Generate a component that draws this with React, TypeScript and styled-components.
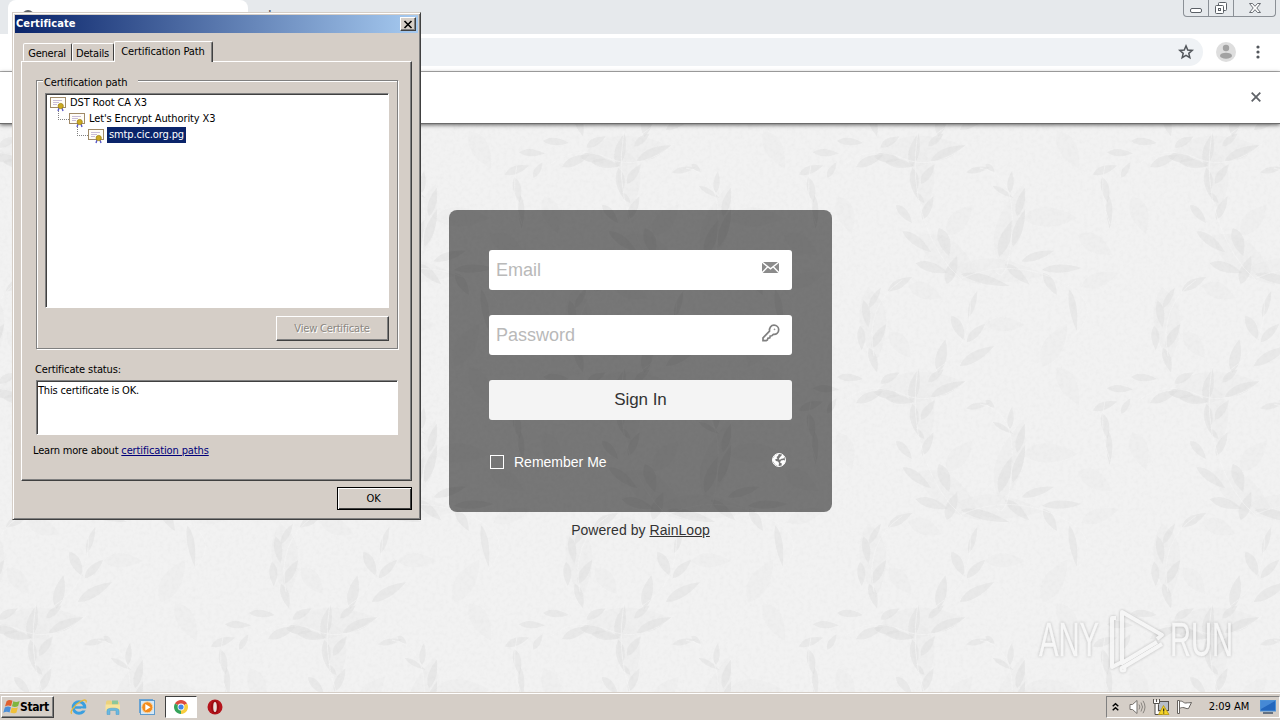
import React from "react";
import styled, { createGlobalStyle, css } from "styled-components";

const TILE_W = 294;
const TILE_H = 236;

// cx, cy, length, width, angle
const leaves = [
  [10, 22, 26, 8, 4], [30, 41, 30, 10, -24], [47, 38, 26, 11, 5], [60, 44, 30, 10, 8],
  [50, 22, 22, 9, -30], [75, 30, 34, 12, -78], [108, 33, 38, 11, -24], [96, 20, 20, 8, -40],
  [88, 54, 24, 9, -55], [74, 62, 28, 10, 84], [80, 78, 14, 6, 50], [64, 94, 24, 9, 48],
  [88, 88, 26, 9, -65], [77, 122, 36, 10, 36], [104, 122, 30, 13, 70], [92, 148, 34, 11, 16],
  [112, 150, 30, 12, -70], [138, 50, 24, 7, -12], [150, 48, 12, 6, 40], [163, 72, 24, 6, 30],
  [171, 62, 22, 7, -85], [181, 82, 30, 9, -75], [166, 118, 40, 12, -70], [179, 108, 40, 10, -72],
  [198, 136, 34, 9, -18], [222, 149, 40, 9, -3], [177, 154, 32, 10, 40], [145, 160, 50, 10, 14],
  [210, 164, 26, 10, 58], [233, 190, 42, 8, 80], [60, 164, 28, 10, -30], [35, 178, 24, 7, -60],
  [26, 194, 28, 9, 80], [21, 218, 24, 9, 86], [39, 216, 28, 10, -60], [33, 240, 26, 9, 72],
  [133, 184, 28, 7, -72], [118, 208, 28, 11, 62], [136, 213, 26, 9, -45], [137, 236, 40, 11, -30],
  [102, 236, 34, 12, -78], [265, 50, 26, 9, -20], [265, 70, 26, 9, 78], [269, 92, 34, 7, 88],
  [280, 33, 26, 8, 2], [286, 50, 18, 7, -60],
];

// larger, fainter patches behind the branches
const shadows = [
  [228, 30, 44, 20, 60], [210, 98, 56, 22, 0], [255, 125, 40, 20, 30], [215, 225, 50, 22, -60],
  [5, 95, 40, 20, 70], [120, 100, 40, 20, -50], [85, 172, 36, 18, 20], [165, 205, 40, 16, 0],
  [260, 160, 40, 16, -20], [60, 225, 34, 18, 50], [80, 32, 90, 34, -8], [82, 60, 60, 26, 84],
  [110, 140, 80, 34, 38], [172, 104, 84, 30, -74], [160, 152, 90, 26, 4], [32, 205, 76, 30, 84],
];

const stems =
  "M5 44 Q30 24 62 38 T128 24 M78 10 Q70 60 84 100 T122 160 M140 48 Q176 54 172 110 T156 152 M122 158 Q170 138 218 160 T236 214 M62 160 Q24 186 34 236 M130 176 Q134 226 96 250 M265 44 Q258 76 270 104";

const Leaf = ({ d }: { d: number[] }) => {
  const [x, y, l, w, a] = d;
  const h = l / 2;
  return (
    <path
      transform={`translate(${x} ${y}) rotate(${a})`}
      d={`M${-h} 0 Q${-h / 3} ${-w} ${h} 0 Q${-h / 4} ${w * 0.8} ${-h} 0z`}
    />
  );
};

const Wallpaper = () => (
  <WallpaperSvg>
    <defs>
      <filter id="paper" x="0" y="0" width="100%" height="100%">
        <feTurbulence type="fractalNoise" baseFrequency="0.25" numOctaves="3" seed="4" />
        <feColorMatrix values="0 0 0 0 0.4  0 0 0 0 0.4  0 0 0 0 0.4  0.5 0 0 0 -0.2" />
      </filter>
      <filter id="soft">
        <feGaussianBlur stdDeviation="0.7" />
      </filter>
      <g id="branches">
        <g fill="#dedede" fillOpacity="0.16">
          {shadows.map((d, i) => (
            <Leaf key={i} d={d} />
          ))}
        </g>
        <g fill="#dedede" fillOpacity="0.46">
          {leaves.map((d, i) => (
            <Leaf key={i} d={d} />
          ))}
        </g>
        <path d={stems} fill="none" stroke="#f5f5f5" strokeOpacity="0.6" strokeWidth="1" />
      </g>
      <pattern id="tile" x="840" y="-4" width={TILE_W} height={TILE_H} patternUnits="userSpaceOnUse">
        {[-1, 0, 1].map((i) =>
          [-1, 0, 1].map((j) => (
            <use key={`${i}${j}`} href="#branches" x={i * TILE_W} y={j * TILE_H} />
          ))
        )}
      </pattern>
    </defs>
    <rect width="100%" height="100%" fill="#f2f2f2" />
    <rect width="100%" height="100%" fill="url(#tile)" filter="url(#soft)" />
    <rect width="100%" height="100%" filter="url(#paper)" opacity="0.25" />
  </WallpaperSvg>
);

const CertIcon = () => (
  <svg width="17" height="16" viewBox="0 0 17 16">
    <rect x="0.5" y="2.5" width="15" height="10" fill="#fffdf8" stroke="#a08a68" />
    <path d="M3 5.5h9M3 7.500h6M3 9.500h4" stroke="#c9bdd8" />
    <path d="M9 13l-1 3M12 13l1 3" stroke="#5a5ac8" strokeWidth="1.4" />
    <circle cx="10.7" cy="11" r="2.6" fill="#cdaa22" stroke="#a08312" strokeWidth="0.8" />
  </svg>
);

const Connector = () => (
  <svg width="11" height="16">
    <path d="M0.5 0v9M0 8.5h11" stroke="#808080" strokeDasharray="1 1" fill="none" />
  </svg>
);

const chain = ["DST Root CA X3", "Let's Encrypt Authority X3", "smtp.cic.org.pg"];

const CertificateDialog = () => (
  <Dialog>
    <TitleBar>
      <span>Certificate</span>
      <CloseButton>
        <svg width="8" height="7">
          <path d="M0.5 0l7 7M7.5 0l-7 7" stroke="#000" strokeWidth="1.6" />
        </svg>
      </CloseButton>
    </TitleBar>
    <Tabs>
      <Tab $width={49}>
        <Txt $ls={-0.2}>General</Txt>
      </Tab>
      <Tab $width={42}>
        <Txt $ls={-0.2}>Details</Txt>
      </Tab>
      <Tab $width={99} $active>
        <Txt $ls={-0.1}>Certification Path</Txt>
      </Tab>
    </Tabs>
    <TabPage>
      <GroupBox>
        <Legend>
          <Txt $ls={-0.15}>Certification path</Txt>
        </Legend>
        <Tree>
          {chain.map((name, i) => (
            <TreeRow key={name} $level={i}>
              {i > 0 && <Connector />}
              <CertIcon />
              <NodeName $selected={i === 2}>{name}</NodeName>
            </TreeRow>
          ))}
        </Tree>
        <ViewButton>
          <Txt $ls={-0.17}>View Certificate</Txt>
        </ViewButton>
      </GroupBox>
      <StatusLabel>Certificate status:</StatusLabel>
      <StatusBox>
        <Txt $ls={-0.17}>This certificate is OK.</Txt>
      </StatusBox>
      <LearnMore>
        <Txt $ls={-0.17}>Learn more about </Txt>
        <a>certification paths</a>
      </LearnMore>
    </TabPage>
    <OkButton>OK</OkButton>
  </Dialog>
);

const Browser = () => (
  <>
    <TabStrip>
      <BrowserTab>
        <svg width="14" height="14">
          <circle cx="7" cy="7" r="6" fill="#5f6368" />
        </svg>
      </BrowserTab>
      <NewTab>+</NewTab>
      <WindowButtons>
        <WindowButton $width={24}>
          <svg width="14" height="16">
            <rect x="1.5" y="8.5" width="11" height="4" rx="1.5" fill="#fff" stroke="#5b6066" />
          </svg>
        </WindowButton>
        <WindowButton $width={25}>
          <svg width="14" height="16" fill="#fff" stroke="#5b6066">
            <rect x="4.5" y="2.5" width="8" height="8" rx="1" />
            <rect x="1.5" y="5.5" width="8" height="8" rx="1" />
            <rect x="4.5" y="8.5" width="2" height="2" />
          </svg>
        </WindowButton>
        <WindowButton $width={42}>
          <svg width="14" height="16" fill="#fff" stroke="#5b6066" strokeWidth="0.9">
            <path d="M1.5 3.5h3L7 6.3l2.500-2.800h3L8.800 8l3.700 4.500h-3L7 9.700 4.500 12.500h-3L5.200 8z" />
          </svg>
        </WindowButton>
      </WindowButtons>
    </TabStrip>
    <Toolbar>
      <Omnibox>
        <svg width="16" height="16" viewBox="0 0 16 16">
          <path
            d="M8 1.900l1.750 4.100 4.450.4-3.400 2.950 1.050 4.350L8 11.400l-3.850 2.300 1.050-4.350L1.800 6.400l4.450-.4z"
            fill="none"
            stroke="#53575c"
            strokeWidth="1.5"
          />
        </svg>
      </Omnibox>
      <svg width="20" height="20">
        <circle cx="10" cy="10" r="10" fill="#dedede" />
        <circle cx="10" cy="6" r="3.200" fill="#a2a2a2" />
        <ellipse cx="10" cy="13.700" rx="6" ry="3" fill="#a2a2a2" />
      </svg>
      <svg width="4" height="14" fill="#53575c">
        <circle cx="2" cy="2" r="1.600" />
        <circle cx="2" cy="7" r="1.600" />
        <circle cx="2" cy="12" r="1.600" />
      </svg>
    </Toolbar>
    <InfoBar>
      <svg width="10" height="10">
        <path d="M0.700 0.700l8.600 8.600M9.300 0.700l-8.600 8.600" stroke="#5f6368" strokeWidth="1.800" />
      </svg>
    </InfoBar>
  </>
);

const LoginForm = () => (
  <Login>
    <LoginPanel>
      <Field>
        <span>Email</span>
        <svg width="18" height="18" viewBox="0 0 18 18">
          <rect x="0" y="3" width="17" height="11" fill="#8b8b8b" />
          <path d="M0 3l8.500 6.800L17 3M0 13.800l5.800-6M17 13.800l-5.800-6" fill="none" stroke="#fff" strokeWidth="1.400" />
        </svg>
      </Field>
      <Field>
        <span>Password</span>
        <svg width="18" height="18" viewBox="0 0 18 18" fill="none" stroke="#808080" strokeWidth="1.700">
          <path d="M7.500 7.200C7 4 9 1.200 12 1.200c2.700 0 4.700 2 4.700 4.600 0 3-2.500 5-5.400 4.500L9.800 11.800l-1.600.2-.4 1.900-1.900.4-.5 1.600-1.200.7H1v-2.700z" />
          <circle cx="12.500" cy="5.300" r="0.400" strokeWidth="1" />
        </svg>
      </Field>
      <SignIn>Sign In</SignIn>
      <Options>
        <Checkbox />
        <span>Remember Me</span>
        <svg width="14" height="14" viewBox="0 0 14 14">
          <circle cx="7" cy="7" r="6.500" fill="none" stroke="#fff" />
          <path d="M.8 5.500L3.500 1.800 7 .5 6 3 4.500 4l1 1.500L3 6.500l1 1.500 2 .5 1 1.500-.5 3.500L3 11.500.8 8zM9 7.500l3-.5 1.500 1-1.200 3L9.500 13l.3-2.500L8 9.500zM9 3l1.500-1.500L12.500 4l-1 1.500-2 .2-2 1.300L7 5.500z" fill="#fff" />
        </svg>
      </Options>
    </LoginPanel>
    <Powered>
      Powered by <u>RainLoop</u>
    </Powered>
  </Login>
);

const AnyRun = () => (
  <Watermark width="200" height="70" viewBox="0 0 200 70">
    <g fill="#f8f8f8" stroke="#f8f8f8" strokeWidth="0.3">
      <text x="3" y="51" textLength="60" lengthAdjust="spacingAndGlyphs">
        ANY
      </text>
      <text x="134" y="51" textLength="63" lengthAdjust="spacingAndGlyphs">
        RUN
      </text>
    </g>
    <g fill="none" stroke="#f7f7f7" strokeWidth="4" strokeLinejoin="round">
      <path d="M121 37L86 58V7l40 23-5 4" />
      <path d="M80 13h-4v49l10-5" />
      <path d="M86 63l40-24" />
      <circle cx="87" cy="64" r="1.500" />
    </g>
  </Watermark>
);

const Flag = () => (
  <svg width="18" height="18" viewBox="0 0 20 20">
    <path d="M4 3.500C6 2 8 2 10.500 3L9 9C6.500 8 4.500 8 2.200 9.500z" fill="#e0602f" />
    <path d="M11.500 3.500c2 1.200 4.500 1.200 7-.3L16.800 9c-2.400 1.400-4.500 1.400-6.800.3z" fill="#7fb540" />
    <path d="M2 10.500c2.200-1.300 4.500-1.300 6.800-.3l-1.500 5.800c-2.300-1-4.500-1-7 .3z" fill="#4c8fd8" />
    <path d="M9.700 10.500c2.200 1 4.500 1 6.800-.2L15 16c-2.400 1.400-4.500 1.200-6.800.2z" fill="#f0c03a" />
  </svg>
);

const Taskbar = () => (
  <Bar>
    <StartButton>
      <Flag />
      <span>Start</span>
    </StartButton>
    <QuickLaunch>
      <TaskItem>
        <svg width="18" height="18" viewBox="0 0 18 18" fill="none">
          <circle cx="9" cy="9.500" r="5.800" stroke="#3b9fdf" strokeWidth="3" />
          <path d="M5 9.500h10" stroke="#3b9fdf" strokeWidth="2.500" />
          <path d="M11 11.500h6" stroke="#d5cdc5" strokeWidth="2" />
          <path d="M2 15.500C-1 15 4 7 10.500 3.500c4-2.200 6.500-2 5.500 1" stroke="#e9b938" strokeWidth="1.300" />
        </svg>
      </TaskItem>
      <TaskItem>
        <svg width="18" height="18" viewBox="0 0 18 18">
          <path d="M2 4l1-1.500h4L8 4h7v9H2z" fill="#ecd27c" />
          <path d="M8 2.500h6v4H8z" fill="#8cc79a" />
          <path d="M1.500 6.500h14.500V13H1.500z" fill="#f8e49c" />
          <path d="M3 16.500V12c0-2.500 12-2.500 12 0v4.500h-3v-4H6v4z" fill="#6ab8e0" stroke="#4a9aca" strokeWidth="0.500" />
        </svg>
      </TaskItem>
      <TaskItem>
        <svg width="18" height="18" viewBox="0 0 18 18">
          <rect x="1.500" y="1.500" width="13" height="13" fill="#c2ddf3" stroke="#6aa3d2" />
          <rect x="2.500" y="2.500" width="14" height="14" fill="#d4e8f7" stroke="#5f9bcd" />
          <circle cx="9.300" cy="9.300" r="5.500" fill="#f38b1c" stroke="#fbd39f" />
          <path d="M7.300 6v6.600L12.500 9.300z" fill="#fff" />
        </svg>
      </TaskItem>
      <TaskItem $active>
        <svg width="14" height="14" viewBox="0 0 14 14">
          <path d="M7 7L.94 3.500A7 7 0 0 1 13.060 3.500z" fill="#dc4b3e" />
          <path d="M7 7L13.060 3.500A7 7 0 0 1 7 14z" fill="#f8cd3d" />
          <path d="M7 7V14A7 7 0 0 1 .94 3.500z" fill="#35a35a" />
          <circle cx="7" cy="7" r="3.400" fill="#fff" />
          <circle cx="7" cy="7" r="2.600" fill="#4285e8" />
        </svg>
      </TaskItem>
      <TaskItem>
        <svg width="16" height="16">
          <circle cx="8" cy="8" r="7.500" fill="#b5141c" />
          <ellipse cx="8" cy="8" rx="4" ry="6.500" fill="#9a0c13" />
          <ellipse cx="8" cy="8" rx="1.800" ry="5" fill="#eae0dc" />
        </svg>
      </TaskItem>
    </QuickLaunch>
    <Tray>
      <svg width="7" height="8" fill="none" stroke="#000" strokeWidth="1.500">
        <path d="M0.700 3.200l2.800-2.400 2.800 2.400M0.700 7.200l2.800-2.400 2.800 2.400" />
      </svg>
      <svg width="17" height="16" viewBox="0 0 17 16" fill="none" stroke="#77736e">
        <path d="M1 5.500h2.500L8 1.500v13l-4.500-4H1z" fill="#fff" />
        <path d="M10 5.500q1.800 2.500 0 5M12 3.500q3 4.500 0 9M14 1.800q4 6.200 0 12.400" stroke="#88847f" />
      </svg>
      <svg width="16" height="16" viewBox="0 0 16 16">
        <rect x="5.500" y="2.500" width="10" height="9" fill="#b6bdc7" stroke="#55524e" />
        <path d="M1.500 1v3h4V1M3.500 4v10.500H9" fill="none" stroke="#fff" strokeWidth="2.500" />
        <path d="M.5 0v4.500h6V0M2 5v10.500h7M3.500 0v3" fill="none" stroke="#55524e" />
        <path d="M10.500 6.500L16 15.500H5.500z" fill="#f5d426" stroke="#b6960d" strokeWidth="0.800" />
        <path d="M10.700 9.500v3M10.700 13.500v1" stroke="#222" strokeWidth="1.200" />
      </svg>
      <svg width="17" height="16" viewBox="0 0 17 16" fill="#fff" stroke="#66625e">
        <path d="M3.500 2.500c3-1.500 4 2 6.500 1.500 2-.5 3 0 5.500-.5l-3 6c-2 .5-3-.5-4.500-.8-2-.4-3 0-4.500.8z" />
        <path d="M1.500 1.500h2v13h-2z" />
      </svg>
      <Clock>2:09 AM</Clock>
      <svg width="16" height="14" viewBox="0 0 16 14">
        <rect x="0.500" y="0.500" width="15" height="10.500" fill="#2467bd" stroke="#4d91d6" />
        <path d="M1 1h14L1 9z" fill="#5598df" opacity="0.700" />
        <path d="M3 13h10" stroke="#40536b" strokeWidth="1.500" />
      </svg>
    </Tray>
  </Bar>
);

export default function App() {
  return (
    <Screen>
      <GlobalStyle />
      <Browser />
      <Page>
        <Wallpaper />
        <LoginForm />
        <AnyRun />
      </Page>
      <Taskbar />
      <CertificateDialog />
    </Screen>
  );
}

const face = "#d5cec7";

const GlobalStyle = createGlobalStyle`
  * {
    box-sizing: border-box;
  }
  body {
    margin: 0;
    overflow: hidden;
  }
  svg {
    display: block;
    flex: none;
    overflow: visible;
  }
`;

const tahoma = css`
  font-family: "DejaVu Sans Condensed", "DejaVu Sans", sans-serif;
  font-stretch: condensed;
  font-size: 11px;
  line-height: 16px;
  letter-spacing: -0.12px;
  white-space: nowrap;
`;

const Screen = styled.div`
  position: relative;
  display: flex;
  flex-direction: column;
  width: 1280px;
  height: 720px;
  overflow: hidden;
  font-family: "Liberation Sans", Arial, sans-serif;
`;

const TabStrip = styled.div`
  display: flex;
  align-items: flex-start;
  height: 34px;
  padding-left: 8px;
  background: #e6e9ec;
`;

const BrowserTab = styled.div`
  width: 240px;
  height: 34px;
  padding: 9px 13px;
  border-radius: 8px 8px 0 0;
  background: #fff;
`;

const NewTab = styled.div`
  margin: 4px 0 0 16px;
  font-size: 20px;
  line-height: 22px;
  color: #5f6368;
`;

const WindowButtons = styled.div`
  display: flex;
  height: 17px;
  margin: 0 4px 0 auto;
  border: 1px solid #8b9096;
  border-top: 0;
  border-radius: 0 0 4px 4px;
`;

const WindowButton = styled.div<{ $width: number }>`
  display: flex;
  justify-content: center;
  width: ${(props) => props.$width}px;

  & + & {
    border-left: 1px solid #8b9096;
  }
`;

const Toolbar = styled.div`
  display: flex;
  align-items: center;
  gap: 13px;
  height: 38px;
  padding: 0 20px 2px 80px;
  border-bottom: 1px solid #b4b4b4;
  background: #fff;

  > svg:last-child {
    margin-left: 7px;
  }
`;

const Omnibox = styled.div`
  display: flex;
  flex: 1;
  align-items: center;
  justify-content: flex-end;
  height: 28px;
  padding-right: 9px;
  border-radius: 14px;
  background: #eff2f5;
`;

const InfoBar = styled.div`
  z-index: 1;
  display: flex;
  align-items: center;
  justify-content: flex-end;
  height: 52px;
  padding: 0 19px 1px 0;
  border-bottom: 1px solid #6b6b6b;
  background: #fff;
  box-shadow: 0 1px 4px rgba(0, 0, 0, 0.6);
`;

const Page = styled.main`
  position: relative;
  flex: 1;
  overflow: hidden;
`;

const WallpaperSvg = styled.svg`
  position: absolute;
  inset: 0;
  width: 100%;
  height: 100%;
`;

const Login = styled.div`
  position: relative;
  display: flex;
  flex-direction: column;
  align-items: center;
  padding: 86px 0 0 1px;
`;

const LoginPanel = styled.div`
  display: flex;
  flex-direction: column;
  width: 383px;
  height: 302px;
  padding: 40px;
  border-radius: 8px;
  background: rgba(0, 0, 0, 0.51);
`;

const Field = styled.div`
  display: flex;
  align-items: center;
  justify-content: space-between;
  height: 40px;
  margin-bottom: 25px;
  padding: 0 12px 0 7px;
  border-radius: 3px;
  background: #fff;
  font-size: 18px;
  color: #b9b9b9;

  svg {
    margin-bottom: 4px;
  }
`;

const SignIn = styled.div`
  height: 40px;
  border-radius: 3px;
  background: #f4f4f4;
  font-size: 17px;
  line-height: 39px;
  letter-spacing: -0.05px;
  text-align: center;
  color: #333;
`;

const Options = styled.div`
  display: flex;
  align-items: center;
  height: 20px;
  margin-top: 32px;
  padding: 0 6px 0 1px;
  font-size: 14px;
  color: #fff;

  span {
    margin-left: 10px;
  }

  svg {
    margin: 0 0 4px auto;
  }
`;

const Checkbox = styled.div`
  width: 14px;
  height: 14px;
  border: 1px solid #fff;
`;

const Powered = styled.div`
  margin-top: 8px;
  font-size: 14px;
  line-height: 20px;
  letter-spacing: 0.05px;
  color: #333;
`;

const Watermark = styled.svg`
  position: absolute;
  right: 44px;
  bottom: 17px;
  opacity: 0.85;
  filter: drop-shadow(0 0 1.5px rgba(0, 0, 0, 0.27));

  text {
    font-family: "Liberation Sans Narrow", "Liberation Sans", sans-serif;
    font-size: 49px;
  }
`;

const raised = css`
  border: 1px solid;
  border-color: #fff #404040 #404040 #fff;
  box-shadow: inset -1px -1px #808080;
  background: ${face};
`;

const sunken = css`
  border: 1px solid;
  border-color: #808080 #fff #fff #808080;
  box-shadow: inset 1px 1px #404040;
  background: #fff;
`;

const Dialog = styled.div`
  ${tahoma}
  position: absolute;
  z-index: 2;
  left: 12px;
  top: 12px;
  display: flex;
  flex-direction: column;
  width: 409px;
  height: 508px;
  padding: 2px;
  border: 1px solid;
  border-color: ${face} #404040 #404040 ${face};
  box-shadow: inset 1px 1px #fff, inset -1px -1px #808080;
  background: ${face};
  color: #000;
`;

const TitleBar = styled.div`
  display: flex;
  align-items: center;
  justify-content: space-between;
  height: 18px;
  padding: 0 2px 0 1px;
  background: linear-gradient(90deg, #0a246a, #a6caf0);
  font-weight: bold;
  letter-spacing: 0.08px;
  color: #fff;
`;

const CloseButton = styled.div`
  ${raised}
  display: flex;
  align-items: center;
  justify-content: center;
  width: 16px;
  height: 14px;
`;

const Tabs = styled.div`
  z-index: 1;
  display: flex;
  align-items: flex-end;
  height: 28px;
  margin-left: 8px;
`;

const Tab = styled.div<{ $width: number; $active?: boolean }>`
  display: flex;
  justify-content: center;
  width: ${(props) => props.$width}px;
  height: ${(props) => (props.$active ? 21 : 18)}px;
  margin-bottom: ${(props) => (props.$active ? -1 : 0)}px;
  padding: 2px 1px 0 0;
  border: 1px solid;
  border-color: #fff #404040 transparent #fff;
  border-radius: 2px 2px 0 0;
  background: ${face};
  ${(props) => props.$active && "box-shadow: inset -1px 0 #808080; border-bottom: 0;"}
`;

const Txt = styled.span<{ $ls: number }>`
  letter-spacing: ${(props) => props.$ls}px;
  white-space: pre;
`;

const TabPage = styled.div`
  display: flex;
  flex-direction: column;
  width: 391px;
  height: 420px;
  margin-left: 6px;
  padding: 18px 13px 0 14px;
  border: 1px solid;
  border-color: #fff #404040 #404040 #fff;
  box-shadow: inset -1px -1px #808080;
`;

const GroupBox = styled.div`
  display: flex;
  flex-direction: column;
  height: 269px;
  padding: 0 8px;
  border: 1px solid #808080;
  box-shadow: inset 1px 1px #fff, 1px 1px #fff;
`;

const Legend = styled.div`
  align-self: flex-start;
  width: 95px;
  height: 16px;
  margin: -7px 0 3px -2px;
  padding-left: 1px;
  background: ${face};
  line-height: 17px;
`;

const Tree = styled.div`
  ${sunken}
  height: 215px;
  padding: 1px 0;
`;

const TreeRow = styled.div<{ $level: number }>`
  display: flex;
  height: 16px;
  padding-left: ${(props) => (props.$level ? props.$level * 19 - 7 : 4)}px;
`;

const NodeName = styled.span<{ $selected: boolean }>`
  height: 16px;
  margin-left: 1px;
  padding: 0 2px;
  ${(props) =>
    props.$selected && "margin-left: 2px; background: #0a246a; color: #fff;"}
`;

const ViewButton = styled.div`
  ${raised}
  align-self: flex-end;
  width: 113px;
  height: 25px;
  margin-top: 8px;
  padding-right: 1px;
  line-height: 24px;
  text-align: center;
  color: #8a8680;
  text-shadow: 1px 1px #fff;
`;

const StatusLabel = styled.div`
  margin: 13px 0 2px -1px;
`;

const StatusBox = styled.div`
  ${sunken}
  height: 55px;
  padding: 2px 1px;
`;

const LearnMore = styled.div`
  margin: 8px 0 0 -3px;

  a {
    color: #00007a;
    text-decoration: underline;
  }
`;

const OkButton = styled.div`
  align-self: flex-end;
  width: 75px;
  height: 23px;
  margin: 6px 6px 0 0;
  padding-right: 2px;
  border: 1px solid #000;
  box-shadow: inset 1px 1px #fff, inset -1px -1px #404040;
  line-height: 21px;
  text-align: center;
`;

const Bar = styled.div`
  ${tahoma}
  display: flex;
  align-items: center;
  height: 28px;
  padding: 1px 0 0 1px;
  border-top: 1px solid ${face};
  box-shadow: inset 0 1px #fff;
  background: ${face};
`;

const StartButton = styled.div`
  ${raised}
  display: flex;
  align-items: center;
  width: 53px;
  height: 22px;
  padding-left: 1px;

  span {
    margin-left: -1px;
    font-size: 12px;
    font-weight: bold;
    letter-spacing: -0.4px;
  }
`;

const QuickLaunch = styled.div`
  display: flex;
  gap: 2px;
  margin-left: 9px;
`;

const TaskItem = styled.div<{ $active?: boolean }>`
  display: flex;
  align-items: center;
  justify-content: center;
  width: 32px;
  height: 22px;
  ${(props) =>
    props.$active &&
    "background: #fff; border: 1px solid; border-color: #404040 #fff #fff #404040;"}
`;

const Tray = styled.div`
  display: flex;
  align-items: center;
  width: 174px;
  height: 22px;
  margin-left: auto;
  padding: 0 3px 0 5px;
  border: 1px solid;
  border-color: #808080 #fff #fff #808080;

  svg:nth-child(2) {
    margin-left: 10px;
  }

  svg:nth-child(3),
  svg:nth-child(4) {
    margin-left: 7px;
  }
`;

const Clock = styled.div`
  flex: 1;
  padding-left: 5px;
  letter-spacing: 0;
  text-align: center;
`;
